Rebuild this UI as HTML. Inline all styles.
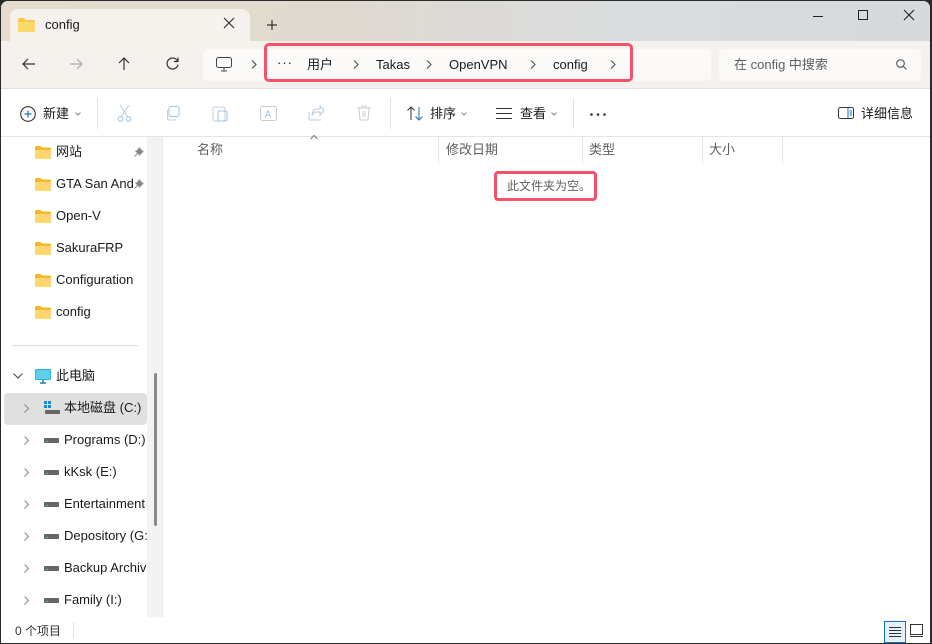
<!DOCTYPE html>
<html><head><meta charset="utf-8">
<style>
*{margin:0;padding:0;box-sizing:border-box}
body{width:932px;height:644px;overflow:hidden;font-family:"Liberation Sans","Noto Sans CJK SC",sans-serif;font-size:13px;line-height:16px;color:#1a1a1a;background:#2a2a2a}
.win{position:absolute;left:1px;top:1px;width:929px;height:642px;border-radius:7px 7px 0 0;overflow:hidden;background:#fff}
.title{position:absolute;left:0;top:0;width:100%;height:40px;background:linear-gradient(90deg,#e5dccf 0%,#e0d9cf 35%,#d8dcdf 70%,#d6dadd 100%)}
.tab{position:absolute;left:9px;top:8px;width:240px;height:32px;background:#f5f2ed;border-radius:8px 8px 0 0}
.abs{position:absolute;line-height:16px}
.addr{position:absolute;left:0;top:40px;width:100%;height:48px;background:#f5f2ed;border-bottom:1px solid #e4ddd3}
.tool{position:absolute;left:0;top:89px;width:100%;height:47px;background:#fff;border-bottom:1px solid #e5e5e5}
.nav{position:absolute;left:0;top:136px;width:146px;height:480px;background:#fff;overflow:hidden}
.sb{position:absolute;left:146px;top:136px;width:16px;height:480px;background:#f3f3f3;border-right:1px solid #e8e8e8}
.item{position:absolute;white-space:nowrap;font-size:13px;line-height:16px}
.status{position:absolute;left:0;top:617px;width:100%;height:25px;background:#fff}
svg{position:absolute;overflow:visible}
.gray{color:#5f5f5f}
</style></head><body>
<div class="win">
<div class="title"></div>
<div class="tab"></div>
<svg style="left:17px;top:17px" width="17" height="14"><path d="M0 2 Q0 0 2 0 H6 L8 2 H15 Q17 2 17 4 V12 Q17 14 15 14 H2 Q0 14 0 12Z" fill="#f7c948"/><path d="M0 4 H17 V12 Q17 14 15 14 H2 Q0 14 0 12Z" fill="#fbd96a"/></svg>
<div class="abs" style="left:44px;top:16px;font-size:13px">config</div>
<svg style="left:223px;top:17px" width="10" height="10"><path d="M0 0L10 10M10 0L0 10" stroke="#333" stroke-width="1.2"/></svg>
<svg style="left:266px;top:19px" width="10" height="10"><path d="M5 0V10M0 5H10" stroke="#333" stroke-width="1.2"/></svg>
<svg style="left:812px;top:15px" width="10" height="1"><path d="M0 0.5H10" stroke="#222"/></svg>
<svg style="left:857px;top:9px" width="10" height="10"><rect x=".5" y=".5" width="9" height="9" fill="none" stroke="#222"/></svg>
<svg style="left:903px;top:9px" width="10" height="10"><path d="M0 0L10 10M10 0L0 10" stroke="#222" stroke-width="1.1"/></svg>

<div class="addr"></div>
<svg style="left:21px;top:57px" width="13" height="12"><path d="M13 6H1M6 1L1 6L6 11" fill="none" stroke="#333" stroke-width="1.2"/></svg>
<svg style="left:69px;top:57px" width="13" height="12"><path d="M0 6H12M7 1L12 6L7 11" fill="none" stroke="#aaa" stroke-width="1.2"/></svg>
<svg style="left:117px;top:56px" width="12" height="13"><path d="M6 13V1M1 6L6 1L11 6" fill="none" stroke="#333" stroke-width="1.2"/></svg>
<svg style="left:165px;top:56px" width="13" height="13"><path d="M11.5 4A5.5 5.5 0 1 0 12 7.5M12 0.5V4.5H8" fill="none" stroke="#333" stroke-width="1.2"/></svg>
<div class="abs" style="left:202px;top:48px;width:508px;height:32px;background:#fbfaf8;border-radius:5px"></div>
<svg style="left:215px;top:56px" width="16" height="15"><rect x=".5" y=".5" width="15" height="10" rx="2" fill="none" stroke="#444"/><path d="M5 14H11M8 11V14" stroke="#444"/></svg>
<svg style="left:250px;top:59px" width="6" height="9"><path d="M1 0.5L5 4.5L1 8.5" fill="none" stroke="#444"/></svg>
<div class="abs" style="left:263px;top:42px;width:369px;height:39px;border:3px solid #f4516a;border-radius:5px"></div>
<div class="abs" style="left:276px;top:54px;font-size:13px;letter-spacing:1px">···</div>
<div class="abs" style="left:306px;top:56px">用户</div>
<svg style="left:352px;top:59px" width="6" height="9"><path d="M1 0.5L5 4.5L1 8.5" fill="none" stroke="#444"/></svg>
<div class="abs" style="left:375px;top:56px">Takas</div>
<svg style="left:425px;top:59px" width="6" height="9"><path d="M1 0.5L5 4.5L1 8.5" fill="none" stroke="#444"/></svg>
<div class="abs" style="left:448px;top:56px">OpenVPN</div>
<svg style="left:529px;top:59px" width="6" height="9"><path d="M1 0.5L5 4.5L1 8.5" fill="none" stroke="#444"/></svg>
<div class="abs" style="left:552px;top:56px">config</div>
<svg style="left:609px;top:59px" width="6" height="9"><path d="M1 0.5L5 4.5L1 8.5" fill="none" stroke="#444"/></svg>
<div class="abs" style="left:718px;top:48px;width:202px;height:32px;background:#fbfaf8;border-radius:5px"></div>
<div class="abs gray" style="left:733px;top:56px">在 config 中搜索</div>
<svg style="left:895px;top:58px" width="11" height="11"><circle cx="4.5" cy="4.5" r="3.8" fill="none" stroke="#555" stroke-width="1.1"/><path d="M7.3 7.3L10.5 10.5" stroke="#555" stroke-width="1.1"/></svg>

<div class="tool"></div>
<svg style="left:19px;top:105px" width="16" height="16"><circle cx="8" cy="8" r="7.3" fill="none" stroke="#333" stroke-width="1.1"/><path d="M8 4.5V11.5M4.5 8H11.5" stroke="#1a6fd0" stroke-width="1.2"/></svg>
<div class="abs" style="left:42px;top:105px">新建</div>
<svg style="left:74px;top:111px" width="6" height="4"><path d="M0.5 0.5L3 3L5.5 0.5" fill="none" stroke="#888"/></svg>
<div class="abs" style="left:96px;top:97px;width:1px;height:31px;background:#e3e3e3"></div>
<svg style="left:116px;top:104px" width="15" height="17"><path d="M3 0L11 12M12 0L4 12" stroke="#bcd" stroke-width="1"/><circle cx="3.5" cy="14" r="2.3" fill="none" stroke="#9cc4ea"/><circle cx="11.5" cy="14" r="2.3" fill="none" stroke="#9cc4ea"/></svg>
<svg style="left:164px;top:105px" width="15" height="15"><rect x="4" y=".5" width="10" height="10" rx="2" fill="none" stroke="#9cc4ea"/><path d="M2.5 4V12Q2.5 14 4.5 14H11" fill="none" stroke="#ccc"/></svg>
<svg style="left:211px;top:104px" width="16" height="17"><rect x="1" y="2" width="12" height="14" rx="2" fill="none" stroke="#ccc"/><rect x="6" y="6" width="9" height="10" rx="1.5" fill="none" stroke="#9cc4ea"/></svg>
<svg style="left:259px;top:105px" width="17" height="15"><rect x=".5" y=".5" width="16" height="14" rx="2" fill="none" stroke="#ccc"/><text x="4.5" y="11.5" font-size="10" fill="#9cc4ea" font-family="Liberation Sans">A</text></svg>
<svg style="left:307px;top:105px" width="16" height="15"><path d="M8 3H12V0L16 4.5L12 9V6H9Q5 6 4 10Q4 4 8 3Z M1 6V13Q1 14 2 14H13" fill="none" stroke="#b8cde2"/></svg>
<svg style="left:356px;top:104px" width="14" height="16"><path d="M0 3H14M5 3V1H9V3M2 3L3 15H11L12 3M6 6V12M8 6V12" fill="none" stroke="#ccc"/></svg>
<div class="abs" style="left:389px;top:97px;width:1px;height:31px;background:#e3e3e3"></div>
<svg style="left:406px;top:105px" width="16" height="15"><path d="M4 14V1M0.5 4.5L4 1L7.5 4.5" fill="none" stroke="#333"/><path d="M12 1V14M8.5 10.5L12 14L15.5 10.5" fill="none" stroke="#1a6fd0"/></svg>
<div class="abs" style="left:429px;top:105px">排序</div>
<svg style="left:460px;top:111px" width="6" height="4"><path d="M0.5 0.5L3 3L5.5 0.5" fill="none" stroke="#888"/></svg>
<svg style="left:495px;top:107px" width="16" height="11"><path d="M0 .5H16M0 5.5H16M0 10.5H16" stroke="#333"/></svg>
<div class="abs" style="left:519px;top:105px">查看</div>
<svg style="left:550px;top:111px" width="6" height="4"><path d="M0.5 0.5L3 3L5.5 0.5" fill="none" stroke="#888"/></svg>
<div class="abs" style="left:572px;top:97px;width:1px;height:31px;background:#e3e3e3"></div>
<svg style="left:589px;top:112px" width="16" height="3"><circle cx="1.5" cy="1.5" r="1.3" fill="#333"/><circle cx="8" cy="1.5" r="1.3" fill="#333"/><circle cx="14.5" cy="1.5" r="1.3" fill="#333"/></svg>
<svg style="left:837px;top:106px" width="16" height="12"><rect x=".5" y=".5" width="15" height="11" rx="2" fill="none" stroke="#333"/><path d="M10 .5V11.5M11.5 4H14M11.5 6H14M11.5 8H14" stroke="#1a6fd0"/></svg>
<div class="abs" style="left:860px;top:105px">详细信息</div>

<div class="nav">
 <div class="item" style="left:55px;top:7px">网站</div>
 <div class="item" style="left:55px;top:39px;width:77px;overflow:hidden">GTA San Andreas</div>
 <div class="item" style="left:55px;top:71px">Open-V</div>
 <div class="item" style="left:55px;top:103px">SakuraFRP</div>
 <div class="item" style="left:55px;top:135px">Configuration</div>
 <div class="item" style="left:55px;top:167px">config</div>
 <div class="abs" style="left:11px;top:208px;width:126px;height:1px;background:#ddd"></div>
 <svg style="left:12px;top:236px" width="10" height="6"><path d="M0.5 0.5L5 5L9.5 0.5" fill="none" stroke="#444"/></svg>
 <svg style="left:34px;top:232px" width="16" height="15"><rect x="0" y="0" width="16" height="11" rx="1" fill="#2bb5d8"/><rect x="1" y="1" width="14" height="9" fill="#5fd0ea"/><path d="M5 14H11M8 11V14" stroke="#2a7fa0" stroke-width="1.5"/></svg>
 <div class="item" style="left:55px;top:231px">此电脑</div>
 <div class="abs" style="left:3px;top:256px;width:143px;height:32px;background:#e0e0e0;border-radius:4px"></div>
 <div class="item" style="left:63px;top:263px">本地磁盘 (C:)</div>
 <div class="item" style="left:63px;top:295px">Programs (D:)</div>
 <div class="item" style="left:63px;top:327px">kKsk (E:)</div>
 <div class="item" style="left:63px;top:359px">Entertainment</div>
 <div class="item" style="left:63px;top:391px">Depository (G:)</div>
 <div class="item" style="left:63px;top:423px">Backup Archive</div>
 <div class="item" style="left:63px;top:455px">Family (I:)</div>
</div>
<div class="sb"><div class="abs" style="left:7px;top:236px;width:3px;height:153px;background:#8a8a8a;border-radius:2px"></div></div>

<svg style="left:34px;top:145px" width="16" height="13"><path d="M0 1.5Q0 0 1.5 0H5.5L7 1.5H14.5Q16 1.5 16 3V11.5Q16 13 14.5 13H1.5Q0 13 0 11.5Z" fill="#f2b927"/><path d="M0 4H16V11.5Q16 13 14.5 13H1.5Q0 13 0 11.5Z" fill="#fcd670"/></svg>
<svg style="left:34px;top:177px" width="16" height="13"><path d="M0 1.5Q0 0 1.5 0H5.5L7 1.5H14.5Q16 1.5 16 3V11.5Q16 13 14.5 13H1.5Q0 13 0 11.5Z" fill="#f2b927"/><path d="M0 4H16V11.5Q16 13 14.5 13H1.5Q0 13 0 11.5Z" fill="#fcd670"/></svg>
<svg style="left:34px;top:209px" width="16" height="13"><path d="M0 1.5Q0 0 1.5 0H5.5L7 1.5H14.5Q16 1.5 16 3V11.5Q16 13 14.5 13H1.5Q0 13 0 11.5Z" fill="#f2b927"/><path d="M0 4H16V11.5Q16 13 14.5 13H1.5Q0 13 0 11.5Z" fill="#fcd670"/></svg>
<svg style="left:34px;top:241px" width="16" height="13"><path d="M0 1.5Q0 0 1.5 0H5.5L7 1.5H14.5Q16 1.5 16 3V11.5Q16 13 14.5 13H1.5Q0 13 0 11.5Z" fill="#f2b927"/><path d="M0 4H16V11.5Q16 13 14.5 13H1.5Q0 13 0 11.5Z" fill="#fcd670"/></svg>
<svg style="left:34px;top:273px" width="16" height="13"><path d="M0 1.5Q0 0 1.5 0H5.5L7 1.5H14.5Q16 1.5 16 3V11.5Q16 13 14.5 13H1.5Q0 13 0 11.5Z" fill="#f2b927"/><path d="M0 4H16V11.5Q16 13 14.5 13H1.5Q0 13 0 11.5Z" fill="#fcd670"/></svg>
<svg style="left:34px;top:305px" width="16" height="13"><path d="M0 1.5Q0 0 1.5 0H5.5L7 1.5H14.5Q16 1.5 16 3V11.5Q16 13 14.5 13H1.5Q0 13 0 11.5Z" fill="#f2b927"/><path d="M0 4H16V11.5Q16 13 14.5 13H1.5Q0 13 0 11.5Z" fill="#fcd670"/></svg>
<svg style="left:133px;top:146px" width="10" height="10"><path d="M5 0L10 5L8.5 5.5L6 8L6.5 9.5L0.5 3.5L2 4L4.5 1.5Z" fill="#888"/><path d="M3.5 6.5L0.5 9.5" stroke="#888"/></svg>
<svg style="left:133px;top:178px" width="10" height="10"><path d="M5 0L10 5L8.5 5.5L6 8L6.5 9.5L0.5 3.5L2 4L4.5 1.5Z" fill="#888"/><path d="M3.5 6.5L0.5 9.5" stroke="#888"/></svg>
<svg style="left:23px;top:403px" width="5" height="9"><path d="M0.5 0.5L4.5 4.5L0.5 8.5" fill="none" stroke="#888"/></svg>
<svg style="left:23px;top:435px" width="5" height="9"><path d="M0.5 0.5L4.5 4.5L0.5 8.5" fill="none" stroke="#888"/></svg>
<svg style="left:23px;top:467px" width="5" height="9"><path d="M0.5 0.5L4.5 4.5L0.5 8.5" fill="none" stroke="#888"/></svg>
<svg style="left:23px;top:499px" width="5" height="9"><path d="M0.5 0.5L4.5 4.5L0.5 8.5" fill="none" stroke="#888"/></svg>
<svg style="left:23px;top:531px" width="5" height="9"><path d="M0.5 0.5L4.5 4.5L0.5 8.5" fill="none" stroke="#888"/></svg>
<svg style="left:23px;top:563px" width="5" height="9"><path d="M0.5 0.5L4.5 4.5L0.5 8.5" fill="none" stroke="#888"/></svg>
<svg style="left:23px;top:595px" width="5" height="9"><path d="M0.5 0.5L4.5 4.5L0.5 8.5" fill="none" stroke="#888"/></svg>
<svg style="left:43px;top:400px" width="16" height="14"><rect x="0" y="0" width="3" height="3" fill="#1a8ad8"/><rect x="4" y="0" width="3" height="3" fill="#1a8ad8"/><rect x="0" y="4" width="3" height="3" fill="#1a8ad8"/><rect x="4" y="4" width="3" height="3" fill="#1a8ad8"/><rect x="1" y="9" width="15" height="4" rx="1" fill="#666"/></svg>
<svg style="left:43px;top:437px" width="16" height="5"><rect width="15" height="5" rx="1" fill="#666"/><rect x="2" y="3" width="2" height="1" fill="#4c4"/></svg>
<svg style="left:43px;top:469px" width="16" height="5"><rect width="15" height="5" rx="1" fill="#666"/><rect x="2" y="3" width="2" height="1" fill="#4c4"/></svg>
<svg style="left:43px;top:501px" width="16" height="5"><rect width="15" height="5" rx="1" fill="#666"/><rect x="2" y="3" width="2" height="1" fill="#4c4"/></svg>
<svg style="left:43px;top:533px" width="16" height="5"><rect width="15" height="5" rx="1" fill="#666"/><rect x="2" y="3" width="2" height="1" fill="#4c4"/></svg>
<svg style="left:43px;top:565px" width="16" height="5"><rect width="15" height="5" rx="1" fill="#666"/><rect x="2" y="3" width="2" height="1" fill="#4c4"/></svg>
<svg style="left:43px;top:597px" width="16" height="5"><rect width="15" height="5" rx="1" fill="#666"/><rect x="2" y="3" width="2" height="1" fill="#4c4"/></svg>

<svg style="left:309px;top:134px" width="8" height="5"><path d="M0.5 4L4 0.5L7.5 4" fill="none" stroke="#777"/></svg>
<div class="abs gray" style="left:196px;top:141px">名称</div>
<div class="abs" style="left:437px;top:136px;width:1px;height:26px;background:#e5e5e5"></div>
<div class="abs gray" style="left:445px;top:141px">修改日期</div>
<div class="abs" style="left:581px;top:136px;width:1px;height:26px;background:#e5e5e5"></div>
<div class="abs gray" style="left:588px;top:141px">类型</div>
<div class="abs" style="left:701px;top:136px;width:1px;height:26px;background:#e5e5e5"></div>
<div class="abs gray" style="left:708px;top:141px">大小</div>
<div class="abs" style="left:781px;top:136px;width:1px;height:26px;background:#e5e5e5"></div>
<div class="abs" style="left:493px;top:170px;width:103px;height:30px;border:3px solid #f4516a;border-radius:4px"></div>
<div class="abs gray" style="left:506px;top:177px;font-size:12px">此文件夹为空。</div>

<div class="status"></div>
<div class="abs" style="left:14px;top:622px;font-size:12px;color:#333">0 个项目</div>
<div class="abs" style="left:72px;top:621px;width:1px;height:16px;background:#e3e3e3"></div>
<div class="abs" style="left:883px;top:620px;width:22px;height:22px;border:1px solid #1a73d0;background:#e6f1fb"></div>
<svg style="left:888px;top:626px" width="12" height="10"><path d="M0 .5H12M0 3.5H12M0 6.5H12M0 9.5H12" stroke="#333"/></svg>
<svg style="left:909px;top:623px" width="13" height="13"><rect x=".5" y=".5" width="12" height="10" fill="none" stroke="#333"/><path d="M0 12.5H13" stroke="#333"/></svg>
</div>
</body></html>
